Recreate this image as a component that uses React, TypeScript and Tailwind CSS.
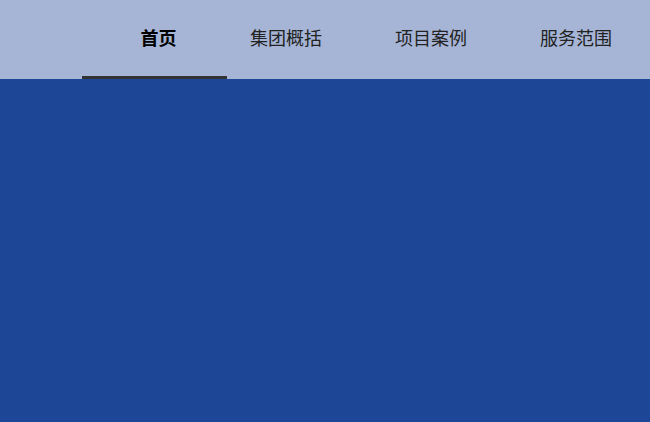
const tabs = [
  { label: "首页", active: true },
  { label: "集团概括" },
  { label: "项目案例" },
  { label: "服务范围" },
];

export default function App() {
  return (
    <div className="flex h-[422px] w-full flex-col overflow-hidden bg-[#1d4697] font-['Liberation_Sans','Noto_Sans_CJK_SC',sans-serif]">
      <nav className="flex h-[79px] shrink-0 bg-[#a6b5d6] pl-[82px]">
        {tabs.map((t) => (
          <div
            key={t.label}
            className={
              t.active
                ? "flex w-[145px] shrink-0 items-center justify-center border-b-[3px] border-[#333333] pt-[2px] pl-[8px] text-[18px] font-bold text-black"
                : "flex w-[145px] shrink-0 items-center border-b-[3px] border-transparent pt-[2px] pl-[23px] text-[18px] text-[#222222]"
            }
          >
            {t.label}
          </div>
        ))}
      </nav>
      <main className="flex-1" />
    </div>
  );
}
